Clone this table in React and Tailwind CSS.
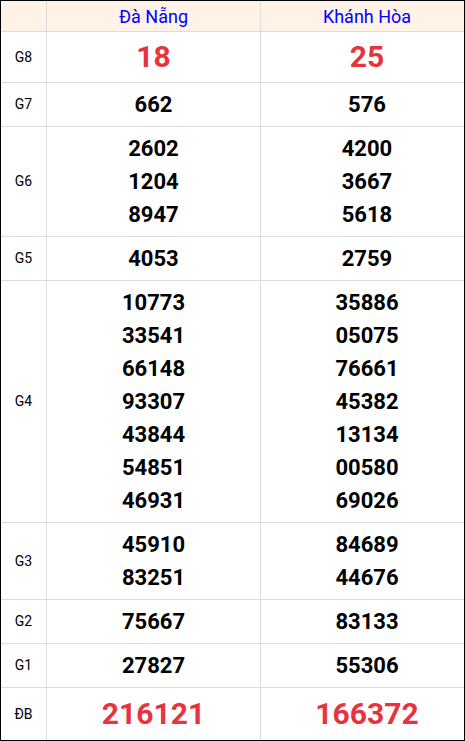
import React from 'react'

const rows = [
  { label: 'G8', a: ['18'], b: ['25'], big: true },
  { label: 'G7', a: ['662'], b: ['576'] },
  { label: 'G6', a: ['2602', '1204', '8947'], b: ['4200', '3667', '5618'] },
  { label: 'G5', a: ['4053'], b: ['2759'] },
  {
    label: 'G4',
    a: ['10773', '33541', '66148', '93307', '43844', '54851', '46931'],
    b: ['35886', '05075', '76661', '45382', '13134', '00580', '69026'],
  },
  { label: 'G3', a: ['45910', '83251'], b: ['84689', '44676'] },
  { label: 'G2', a: ['75667'], b: ['83133'] },
  { label: 'G1', a: ['27827'], b: ['55306'] },
  { label: 'ĐB', a: ['216121'], b: ['166372'], big: true, last: true },
]

function Cell({ nums, big, last, border }) {
  return (
    <div
      className={
        'flex flex-col items-center justify-center ' +
        (border ? 'border-r border-[#dddddd] ' : '') +
        (big
          ? last
            ? 'text-[30px] leading-[42px] py-[5px] text-[#e8333f]'
            : 'text-[30px] leading-[40px] py-[5px] text-[#e8333f]'
          : 'text-[22px] leading-[33px] py-[5px] text-black')
      }
    >
      {nums.map((n) => (
        <div key={n} className="font-bold">{n}</div>
      ))}
    </div>
  )
}

export default function App() {
  return (
    <div className="w-[465px] h-[741px] bg-white border border-black overflow-hidden font-['Roboto',sans-serif]">
      <div className="w-[472px]">
        <div className="grid grid-cols-[46px_214px_212px] h-[31px] bg-[#fff3e8] border-b border-[#dddddd] text-[18px] text-[#0000ff]">
          <div className="border-r border-[#dddddd]"></div>
          <div className="flex items-center justify-center border-r border-[#dddddd]">Đà Nẵng</div>
          <div className="flex items-center justify-center">Khánh Hòa</div>
        </div>
        {rows.map((r) => (
          <div
            key={r.label}
            className={
              'grid grid-cols-[46px_214px_212px] ' + (r.last ? '' : 'border-b border-[#dddddd]')
            }
          >
            <div className="flex items-center justify-center border-r border-[#dddddd] text-[14px] text-black">
              {r.label}
            </div>
            <Cell nums={r.a} big={r.big} last={r.last} border />
            <Cell nums={r.b} big={r.big} last={r.last} />
          </div>
        ))}
      </div>
    </div>
  )
}
